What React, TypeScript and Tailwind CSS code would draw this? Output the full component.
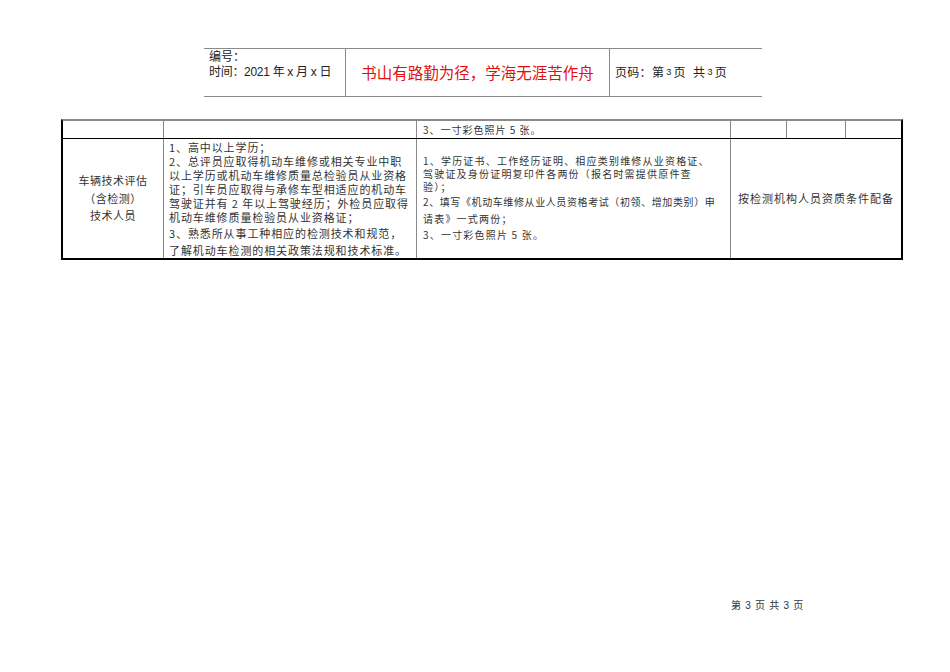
import React from "react";

const cjk = { fontFamily: '"Noto Sans CJK SC", "Noto Sans", sans-serif' };
const hdr = { fontFamily: '"Liberation Sans", "Noto Sans CJK SC", sans-serif' };

export default function App() {
  return (
    <div className="w-[950px] h-[672px] bg-white text-black flex flex-col" style={cjk}>
      {/* header */}
      <div className="ml-[204px] mt-[48px] w-[558px] h-[49px] border-t border-b border-[#8a8a8a] grid grid-cols-[142px_264px_152px]" style={hdr}>
        <div className="border-r border-[#8a8a8a] pl-[5px] pt-[1px] text-[12px] leading-[15px] text-[#222]">
          <div>编号：</div>
          <div className="tracking-[-0.3px]">时间：2021 年 x 月 x 日</div>
        </div>
        <div className="border-r border-[#8a8a8a] flex items-center justify-center text-[15.5px] text-[#e01010]" style={cjk}>
          书山有路勤为径，学海无涯苦作舟
        </div>
        <div className="flex items-center pl-[5px] text-[12px] text-[#222] tracking-[0.3px]">
          页码：第<span className="text-[9px] mx-[2px]">3</span>页&nbsp;&nbsp;共<span className="text-[9px] mx-[2px]">3</span>页
        </div>
      </div>

      {/* table */}
      <div className="ml-[61px] mt-[22px] w-[842px] border-t-2 border-t-[#8a8a8a] border-l-2 border-r-2 border-b-2 border-l-black border-r-black border-b-black text-[#333]">
        <div className="flex h-[18px] border-b border-black">
          <div className="w-[101px] border-r border-[#8a8a8a]" />
          <div className="w-[253px] border-r border-[#8a8a8a]" />
          <div className="w-[314px] border-r border-[#8a8a8a] pl-[6px] flex items-center text-[10px] tracking-[1px] whitespace-nowrap">
            3、一寸彩色照片 5 张。
          </div>
          <div className="w-[56px] border-r border-[#8a8a8a]" />
          <div className="w-[59px] border-r border-[#8a8a8a]" />
          <div className="flex-1" />
        </div>
        <div className="flex h-[119px]">
          <div className="w-[101px] border-r border-[#8a8a8a] flex flex-col items-center justify-center text-[11px] leading-[17.5px] tracking-[0.5px]">
            <div>车辆技术评估</div>
            <div>（含检测）</div>
            <div>技术人员</div>
          </div>
          <div className="w-[253px] border-r border-[#8a8a8a] pl-[5px] pt-[1px] text-[11px] tracking-[0.9px] whitespace-nowrap">
            <div className="leading-[14px]">
              <div>1、高中以上学历；</div>
              <div>2、总评员应取得机动车维修或相关专业中职</div>
              <div>以上学历或机动车维修质量总检验员从业资格</div>
              <div>证；引车员应取得与承修车型相适应的机动车</div>
              <div>驾驶证并有 2 年以上驾驶经历；外检员应取得</div>
              <div>机动车维修质量检验员从业资格证；</div>
            </div>
            <div className="leading-[16.5px] mt-[1px]">
              <div>3、熟悉所从事工种相应的检测技术和规范，</div>
              <div>了解机动车检测的相关政策法规和技术标准。</div>
            </div>
          </div>
          <div className="w-[314px] border-r border-[#8a8a8a] pl-[6px] pt-[15px] text-[10px] tracking-[1.2px] whitespace-nowrap">
            <div className="leading-[13px]">
              <div>1、学历证书、工作经历证明、相应类别维修从业资格证、</div>
              <div>驾驶证及身份证明复印件各两份（报名时需提供原件查</div>
              <div>验）；</div>
            </div>
            <div className="leading-[16.5px] mt-[1px]">
              <div className="tracking-[0.6px]">2、填写《机动车维修从业人员资格考试（初领、增加类别）申</div>
              <div>请表》一式两份；</div>
              <div>3、一寸彩色照片 5 张。</div>
            </div>
          </div>
          <div className="flex-1 flex items-center justify-center text-[11px] tracking-[1px]">
            按检测机构人员资质条件配备
          </div>
        </div>
      </div>

      {/* footer */}
      <div className="ml-[731px] mt-[339px] text-[10px] leading-[12px] tracking-[1px] text-[#333] whitespace-pre">
        第 <span style={hdr}>3</span> 页 共 <span style={hdr}>3</span> 页
      </div>
    </div>
  );
}
